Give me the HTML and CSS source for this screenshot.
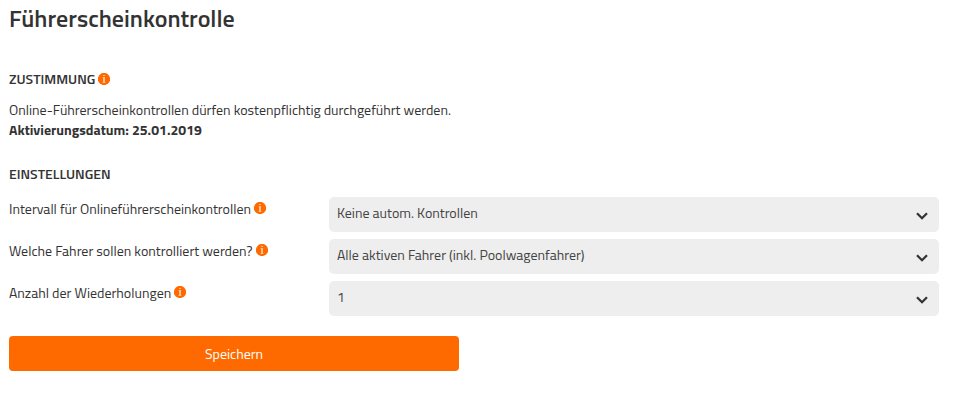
FILE: index.html
```html
<!DOCTYPE html>
<html lang="de">
<head>
    <meta charset="UTF-8">
    <meta name="viewport" content="width=device-width, initial-scale=1.0">
    <title>Führerscheinkontrolle</title>
    <link rel="stylesheet" href="styles.css">
</head>
<body>

    <svg class="sprite" width="0" height="0">
        <symbol id="info" viewBox="0 0 12 12">
            <circle cx="6" cy="6" r="6.1" fill="#ff6a00"/>
            <path d="M5 2h2v1H5zM5 4h2v6H5z" fill="#ffc08f"/>
            <path d="M4.4 4H5v.8h-.6zM4.4 9.3H5v.7h-.6zM7 9.3h.6v.7H7z" fill="#ffa866"/>
        </symbol>
        <symbol id="chevron" viewBox="0 0 12 8">
            <path d="M1 1.2l5 5 5-5" fill="none" stroke="#333" stroke-width="2.3"/>
        </symbol>
    </svg>

    <h1>Führerscheinkontrolle</h1>

    <h2 class="consent-title"><span>ZUSTIMMUNG</span> <svg class="info"><use href="#info"/></svg></h2>
    <p class="consent">Online-Führerscheinkontrollen dürfen kostenpflichtig durchgeführt werden.</p>
    <p class="date">Aktivierungsdatum: 25.01.2019</p>

    <h2 class="settings-title">EINSTELLUNGEN</h2>
    <form>
        <div class="row">
            <label for="interval">Intervall für Onlineführerscheinkontrollen</label>
            <svg class="info"><use href="#info"/></svg>
            <div class="select">
                <select id="interval">
                    <option>Keine autom. Kontrollen</option>
                </select>
                <svg class="chevron"><use href="#chevron"/></svg>
            </div>
        </div>
        <div class="row">
            <label for="drivers">Welche Fahrer sollen kontrolliert werden?</label>
            <svg class="info"><use href="#info"/></svg>
            <div class="select">
                <select id="drivers">
                    <option>Alle aktiven Fahrer (inkl. Poolwagenfahrer)</option>
                </select>
                <svg class="chevron"><use href="#chevron"/></svg>
            </div>
        </div>
        <div class="row">
            <label for="repeats">Anzahl der Wiederholungen</label>
            <svg class="info"><use href="#info"/></svg>
            <div class="select">
                <select id="repeats">
                    <option>1</option>
                </select>
                <svg class="chevron"><use href="#chevron"/></svg>
            </div>
        </div>
        <button type="button">Speichern</button>
    </form>

</body>
</html>
```

FILE: styles.css
```css
* {
    box-sizing: border-box;
}
body {
    margin: 0;
    padding: 3px 20px 0 9px;
    font-family: "Titillium Web", Roboto, sans-serif;
    font-size: 14px;
    line-height: 20px;
    color: #333333;
    background: #ffffff;
}
.sprite {
    display: block;
}
h1 {
    margin: 0;
    font-size: 24px;
    font-weight: 600;
    line-height: 30px;
}
h2 {
    display: flex;
    align-items: center;
    margin: 0;
    font-size: 14px;
    font-weight: 600;
    line-height: 20px;
}
.consent-title {
    gap: 3px;
    margin-top: 36px;
}
.settings-title {
    margin-top: 24px;
}
p {
    margin: 0;
}
.consent {
    margin-top: 11px;
}
.date {
    font-weight: 700;
}
.info {
    width: 12px;
    height: 12px;
    flex: none;
}
.row {
    display: flex;
    height: 35px;
    margin-bottom: 7px;
}
form {
    padding-top: 13px;
}
label {
    padding-top: 2px;
}
.row .info {
    margin: 5px 0 0 3px;
}
.select {
    position: relative;
    width: 610px;
    margin-left: auto;
}
select {
    width: 100%;
    height: 35px;
    padding: 0 30px 4px 8px;
    font: inherit;
    color: #444444;
    background: #eeeeee;
    border: none;
    border-radius: 5px;
    appearance: none;
}
.chevron {
    position: absolute;
    top: 15px;
    right: 11px;
    width: 12px;
    height: 8px;
    pointer-events: none;
}
button {
    display: block;
    width: 450px;
    height: 35px;
    margin-top: 20px;
    padding: 0;
    font: inherit;
    color: #ffffff;
    background: #ff6a00;
    border: none;
    border-radius: 4px;
    cursor: pointer;
}
```
